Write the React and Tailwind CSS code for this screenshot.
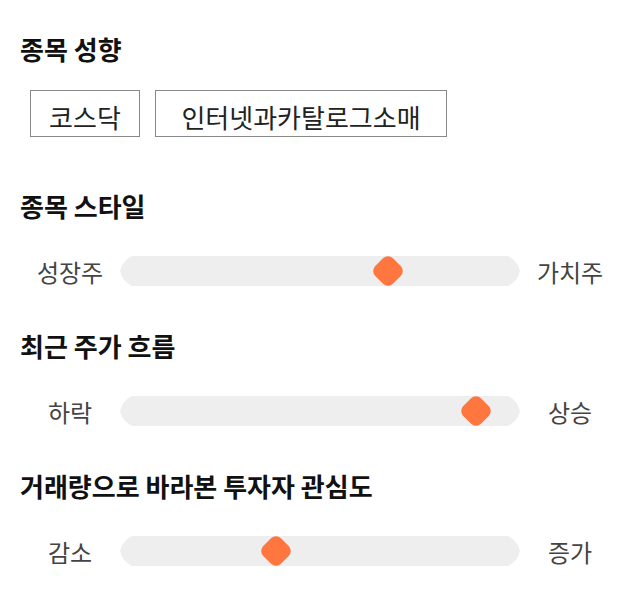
import React from 'react';

const sliders = [
  { title: '종목 스타일', left: '성장주', right: '가치주', value: 67, mt: 'mt-[53px]', gap: 'mt-[32px]' },
  { title: '최근 주가 흐름', left: '하락', right: '상승', value: 89, mt: 'mt-[43px]', gap: 'mt-[32px]' },
  { title: '거래량으로 바라본 투자자 관심도', left: '감소', right: '증가', value: 39, mt: 'mt-[43px]', gap: 'mt-[32px]' },
];

const Track = ({ value }) => (
  <div className="relative w-[400px] h-[30px]">
    <svg width="400" height="30" viewBox="0 0 400 30" className="block">
      <path
        d="M12,0 A22,22 0 0,0 0,15 A22,22 0 0,0 12,30 H388 A22,22 0 0,0 400,15 A22,22 0 0,0 388,0 Z"
        fill="#eeeeee"
      />
    </svg>
    {/* thumb */}
    <div
      className="absolute top-1/2 w-[25px] h-[25px] -translate-x-1/2 -translate-y-1/2 rotate-45 rounded-[7px] bg-[#ff763f]"
      style={{ left: `${value}%` }}
    />
  </div>
);

export default function App() {
  return (
    <div className="w-[640px] min-h-[606px] bg-white px-[20px] pt-[33px] font-['Noto_Sans_CJK_KR',sans-serif]">
      <section>
        <h2 className="text-[26px] leading-[32px] font-bold text-[#111]">종목 성향</h2>
        <div className="mt-[25px] ml-[10px] flex gap-[15px]">
          <div className="w-[110px] h-[47px] border border-[#888] flex items-center justify-center pt-[7px] text-[26px] leading-[30px] text-[#222]">
            코스닥
          </div>
          <div className="w-[292px] h-[47px] border border-[#888] flex items-center justify-center pt-[7px] text-[26px] leading-[30px] text-[#222]">
            인터넷과카탈로그소매
          </div>
        </div>
      </section>

      {sliders.map((s) => (
        <section key={s.title} className={s.mt}>
          <h2 className="text-[26px] leading-[32px] font-bold text-[#111]">{s.title}</h2>
          <div className={`${s.gap} flex items-center`}>
            <span className="w-[100px] text-center text-[24px] leading-[30px] text-[#444] pt-[3px]">{s.left}</span>
            <Track value={s.value} />
            <span className="w-[100px] text-center text-[24px] leading-[30px] text-[#444] pt-[3px]">{s.right}</span>
          </div>
        </section>
      ))}
    </div>
  );
}
